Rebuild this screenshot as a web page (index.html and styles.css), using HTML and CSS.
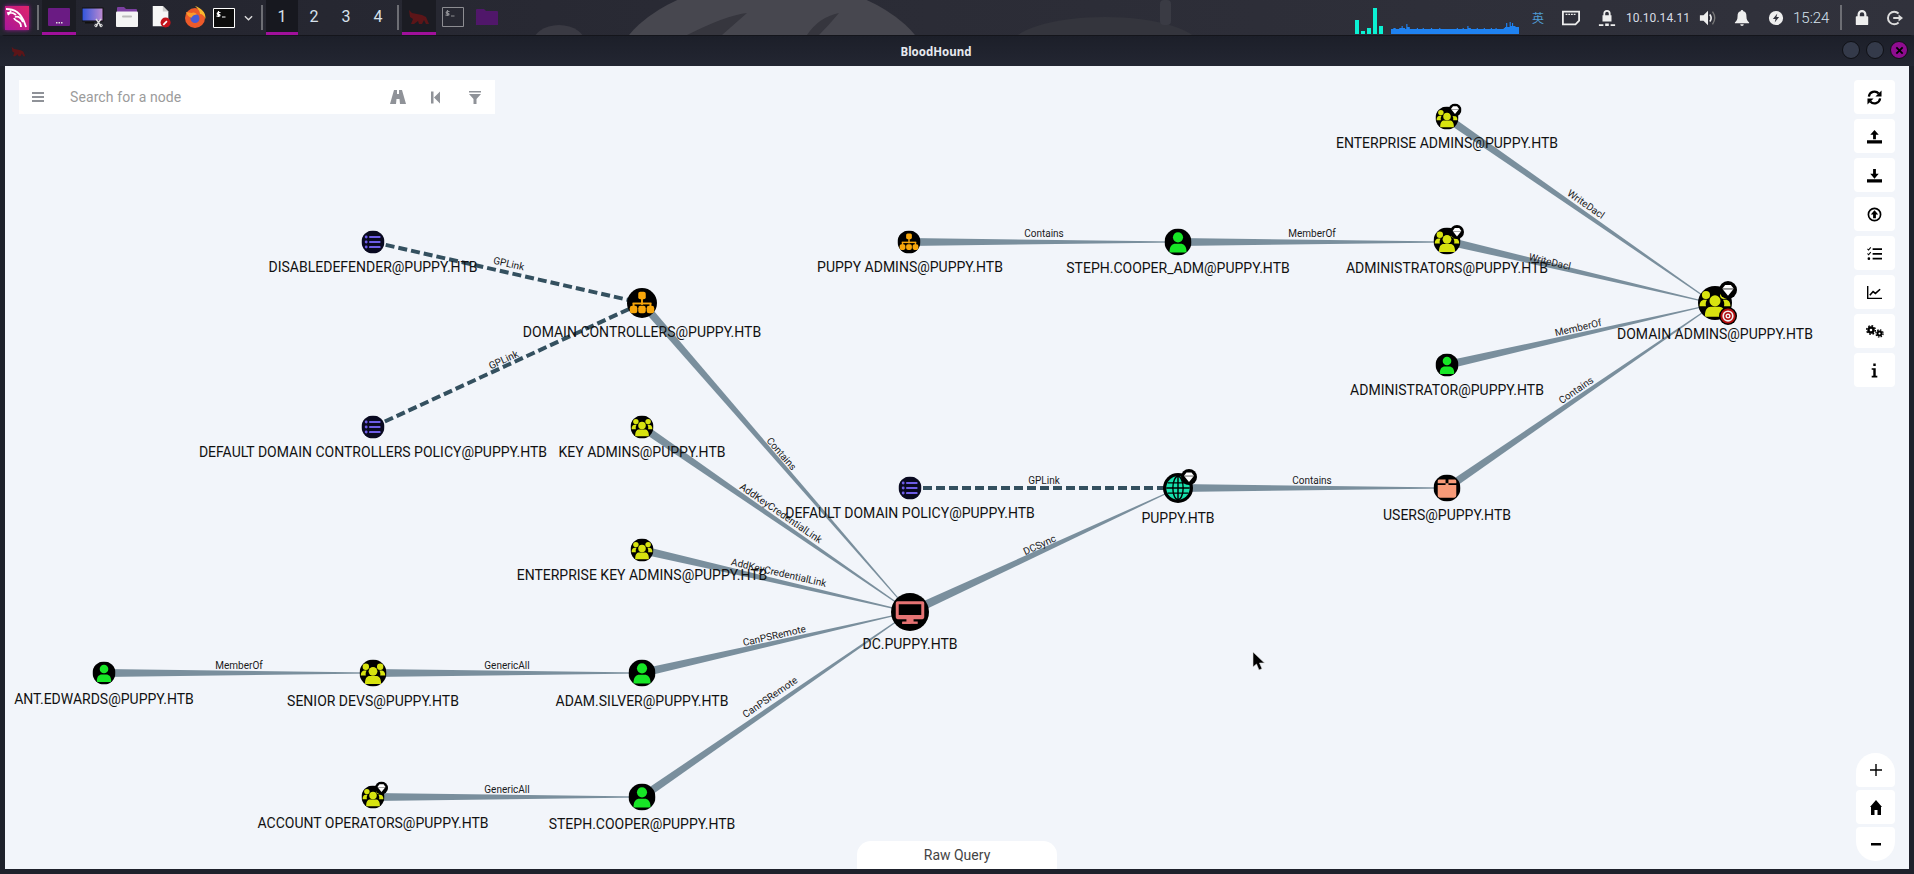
FILE: index.html
```html
<!DOCTYPE html>
<html lang="en">
<head>
<meta charset="utf-8">
<title>BloodHound</title>
<link rel="stylesheet" href="styles.css">
</head>
<body>
<svg class="defs" aria-hidden="true">
  <defs>
    <symbol id="n-group" viewBox="-16 -16 32 32">
      <circle r="16" fill="#000"/>
      <g fill="#d7e30f">
        <circle cx="-8.5" cy="-7.5" r="3.8"/><circle cx="8.5" cy="-7.5" r="3.8"/>
        <path d="M-14.5 3c0-4 2-6 4.5-6h2.5c-1.200 1.800-1.500 4-1 6z"/><path d="M14.500 3c0-4-2-6-4.500-6H7.500c1.200 1.800 1.500 4 1 6z"/>
        <circle cx="0" cy="-2" r="5.200"/>
        <path d="M-9.500 12c0-6 2.500-8.500 5.500-8.500h8c3 0 5.500 2.500 5.500 8.500q0 1-1 1h-17q-1 0-1-1z"/>
      </g>
    </symbol>
    <symbol id="n-user" viewBox="-16 -16 32 32">
      <circle r="16" fill="#000"/>
      <g fill="#17e626">
        <circle cx="0" cy="-5.500" r="6"/>
        <path d="M-10 11c0-6 3-9 7-9h6c4 0 7 3 7 9q0 1.500-1.500 1.500h-17Q-10 12.500-10 11z"/>
      </g>
    </symbol>
    <symbol id="n-ou" viewBox="-16 -16 32 32">
      <circle r="16" fill="#000"/>
      <g fill="#f7a60a">
        <rect x="-4" y="-12" width="8" height="8" rx="2.200"/>
        <rect x="-1" y="-5" width="2" height="7"/><rect x="-10" y="-.5" width="20" height="2"/>
        <rect x="-10" y="0" width="2" height="4"/><rect x="8" y="0" width="2" height="4"/>
        <rect x="-13" y="3" width="8" height="8" rx="2.500"/><rect x="-4" y="3" width="8" height="8" rx="2.500"/><rect x="5" y="3" width="8" height="8" rx="2.500"/>
      </g>
    </symbol>
    <symbol id="n-gpo" viewBox="-16 -16 32 32">
      <circle r="16" fill="#090920"/>
      <g fill="#6d5ce6">
        <circle cx="-9.500" cy="-7" r="2"/><circle cx="-9.500" cy="0" r="2"/><circle cx="-9.500" cy="7" r="2"/>
        <rect x="-5.500" y="-8.500" width="16" height="3" rx="1"/><rect x="-5.500" y="-1.500" width="16" height="3" rx="1"/><rect x="-5.500" y="5.500" width="16" height="3" rx="1"/>
      </g>
    </symbol>
    <symbol id="n-computer" viewBox="-16 -16 32 32">
      <circle r="16" fill="#000"/>
      <path fill="#e57373" fill-rule="evenodd" d="M-10.500-9h21q1.500 0 1.500 1.500v12q0 1.500-1.500 1.500H-3v2.500h3.500V10h-7V8.500H-3V6h-7.500Q-12 6-12 4.500v-12Q-12-9-10.500-9zM-9.500-6.500v9h19v-9z"/>
      <rect x="-3" y="5" width="6" height="3.500" fill="#e57373"/><rect x="-6.500" y="8" width="13" height="2" fill="#e57373"/>
    </symbol>
    <symbol id="n-domain" viewBox="-16 -16 32 32">
      <circle r="16" fill="#000"/>
      <circle r="12.500" fill="#17e2ad"/>
      <g fill="none" stroke="#000" stroke-width="1.500">
        <ellipse rx="5.500" ry="12.500"/><path d="M0-12.500v25M-12.500 0h25M-11-5.500h22M-11 5.500h22"/>
      </g>
    </symbol>
    <symbol id="n-container" viewBox="-16 -16 32 32">
      <circle r="16" fill="#000"/>
      <path fill="#f79a78" d="M-9.500-10h7.800v6.500h3.400V-10h7.800Q11-10 11-8v2.500H-11V-8q0-2 1.500-2zM-11-3.500H11V9q0 2.500-2.500 2.500h-17Q-11 11.500-11 9z"/>
    </symbol>
    <symbol id="b-gem" viewBox="-16 -16 32 32">
      <circle r="16" fill="#000"/>
      <path fill="#fff" d="M-5-9h10l5 6.500H-10z"/>
      <path fill="#a9a9a9" d="M-10-2.500h20l-.8 1.500H-9.200z"/>
      <path fill="#fff" d="M-9-1H9L0 10z"/>
    </symbol>
    <symbol id="b-target" viewBox="-16 -16 32 32">
      <circle r="16" fill="#000"/>
      <circle r="13.500" fill="#b30d0d"/><circle r="10" fill="#f2f2f2"/><circle r="7" fill="#b30d0d"/><circle r="4.500" fill="#f2f2f2"/><circle r="2" fill="#b30d0d"/>
    </symbol>
    <symbol id="i-term" viewBox="0 0 22 20">
      <path fill="none" stroke="currentColor" d="M.5.500h21v19H.5z"/>
      <path fill="none" stroke="currentColor" stroke-width="1.200" d="M5.500 3v6M7.500 4.500H5.200q-1 0-1 .9t1 .9h.8q1 0 1 .9t-1 .9H3.500M9 9h3.500"/>
    </symbol>
  </defs>
</svg>

<header class="panel">
  <span class="wall wall-a"></span><span class="wall wall-b"></span><span class="wall wall-c"></span><span class="wall wall-d"></span>
  <svg class="wall-lines" viewBox="640 0 240 35"><path d="M687 35q40-20 60-22l-25 22M807 35q12-18 32-22-10 12-20 22" fill="#36363e"/></svg>
  <div class="start">
    <svg viewBox="0 0 24 24" class="fill-icon"><path fill="none" stroke="#fff" stroke-width="1.800" d="M1 3c4 0 8 1 11 3 4 3 6 6 8 12l1 3M2 7c4-1 7 0 9 2M6 5l-3 4M10 11c3-1 6 1 8 5M9 12c1 3 4 3 6 5 1 1 1 3 1 4"/></svg>
  </div>
  <span class="sep"></span>
  <div class="tile tile-active">
    <svg class="ic22" viewBox="0 0 22 18"><rect width="22" height="18" rx="1" fill="#6a1b83"/><path d="M8 14h1.500v1.500H8zm2.500 0H12v1.500h-1.500zm2.500 0h1.500v1.500H13z" fill="#ddd"/></svg>
  </div>
  <div class="tile">
    <svg class="ic22" viewBox="0 0 22 20"><rect x="0" y="1" width="21" height="13" fill="url(#scr)" stroke="#111"/><linearGradient id="scr" x1="0" x2="1"><stop offset="0" stop-color="#2f55dd"/><stop offset="1" stop-color="#c08bd0"/></linearGradient><path d="M3 15h9v1.500H3z" fill="#111"/><path d="M14 12l5 7M19 12l-5 7" stroke="#ddd" stroke-width="1.300"/><circle cx="14" cy="18.500" r="1.300" fill="none" stroke="#ddd"/><circle cx="19" cy="18.500" r="1.300" fill="none" stroke="#ddd"/></svg>
  </div>
  <div class="tile">
    <svg class="ic22" viewBox="0 0 22 22"><path d="M1 2q0-1 1-1h6l2 2h10q1 0 1 1v3H1z" fill="#7b3fa0"/><rect y="5.500" width="22" height="15.500" rx="1" fill="#f4f4f4"/><rect x="6" y="9.500" width="10" height="2" rx="1" fill="#bbb"/></svg>
  </div>
  <div class="tile">
    <svg class="ic22" viewBox="0 0 22 24"><path d="M2 0h11l6 6v16H2z" fill="#f6f6f6"/><path d="M13 0l6 6h-6z" fill="#ccc"/><circle cx="16" cy="18" r="5.500" fill="#c4121a"/><path d="M13.500 20.500l4-4" stroke="#fff" stroke-width="1.800"/></svg>
  </div>
  <div class="tile">
    <svg class="ic22" viewBox="0 0 22 22"><circle cx="11" cy="12" r="10" fill="#ec5a2a"/><path d="M11 0c6 2 11 6 10.500 13-1-3-3-5-5.500-5 0-3-2-5-5-8z" fill="#f9b82e"/><circle cx="11" cy="12.500" r="4.500" fill="#4a5bd4"/><path d="M2 6c2 0 3 1 6 1 2-1 4 0 5 1.500-2 0-5 1-5 3-3 0-5-2-6-5.500z" fill="#fb9a2c"/></svg>
  </div>
  <div class="launch-term"><svg class="term term-white"><use href="#i-term"/></svg></div>
  <div class="chev"><svg viewBox="0 0 10 6" class="chev-svg"><path d="M1 1l4 4 4-4" fill="none" stroke="#ddd" stroke-width="1.500"/></svg></div>
  <span class="sep sep-b"></span>
  <div class="ws ws-active">1</div>
  <div class="ws">2</div>
  <div class="ws">3</div>
  <div class="ws">4</div>
  <span class="sep sep-c"></span>
  <div class="tile tile-active">
    <svg class="ic22" viewBox="0 0 22 16"><path class="bull" d="M1 1l3 3 10 2 4 2 3 7h-3l-2-4-2 4h-3l-1-3-4 3H3l2-5-3-2z"/></svg>
  </div>
  <div class="tile"><svg class="term term-dim"><use href="#i-term"/></svg></div>
  <div class="tile">
    <svg class="ic22" viewBox="0 0 22 18"><path d="M0 2q0-1 1-1h7l2 2h11q1 0 1 1v13H0z" fill="#50176a"/></svg>
  </div>

  <div class="tray">
    <svg class="cpu" viewBox="0 0 28 26"><g fill="#0bf1d3"><rect x="0" y="12" width="4" height="14"/><rect x="6" y="23" width="4" height="3"/><rect x="12" y="20" width="4" height="6"/><rect x="18" y="0" width="4" height="26"/><rect x="24" y="18" width="4" height="8"/></g></svg>
    <svg class="net" viewBox="0 0 109 14" preserveAspectRatio="none"><path fill="#1f82f0" d="M0 14V9h2v-1h2v1h3V8h2V6h1v2h2V9h1V4h1v3h2v2h6V8h1v1h4V8h1v1h6V8h1v1h6V8h1v1h14V8h1v1h4V8h1v1h3V6h1v2h2v1h5V8h1v1h5V8h1v1h5V8h1v1h3V8h1v1h6V8h1v-1h1V3h1v4h2V2h1v4h1V3h1v3h2v1h3v7z"/></svg>
    <span class="cjk">英</span>
    <svg class="tic t-net" viewBox="0 0 20 18"><path fill="none" stroke="#eee" stroke-width="2" d="M1 2h18v10l-4 4H1z"/><path stroke="#eee" stroke-width="1.500" d="M4 5h2m1 0h2m1 0h2m1 0h2"/></svg>
    <svg class="tic t-vpn" viewBox="0 0 20 22"><path fill="#eee" d="M6 6a4 4 0 0 1 8 0v2h1v7H5V8h1zm2 2h4V6a2 2 0 0 0-4 0z"/><path fill="#eee" d="M1 18h5v2H1zm7-1h4v3H8zm6 1h5v2h-5z"/></svg>
    <span class="ip">10.10.14.11</span>
    <svg class="tic t-vol" viewBox="0 0 20 18"><path fill="#eee" d="M1 6h4l5-5v16l-5-5H1z"/><path fill="none" stroke="#eee" stroke-width="1.800" d="M12 5q3 4 0 8"/><path fill="none" stroke="#777" stroke-width="1.500" d="M15 2q5 7 0 14"/></svg>
    <svg class="tic t-bell" viewBox="0 0 18 18"><path fill="#eee" d="M9 0a1.500 1.500 0 0 1 1.500 1.500C13 2 14 4 14 7c0 4 1 5 3 7v1H1v-1c2-2 3-3 3-7 0-3 1-5 3.500-5.500A1.500 1.500 0 0 1 9 0zM7 16h4a2 2 0 0 1-4 0z"/></svg>
    <svg class="tic t-pow" viewBox="0 0 18 18"><path fill="#eee" fill-rule="evenodd" d="M9 1a8 8 0 1 1 0 16A8 8 0 0 1 9 1zM10.500 4L5.500 10h3l-1 4 5-6h-3z"/></svg>
    <span class="clock">15:24</span>
    <span class="sep sep-d"></span>
    <svg class="tic t-lock" viewBox="0 0 18 18"><path fill="#eee" d="M4 7V5a5 5 0 0 1 10 0v2h1q1 0 1 1v8q0 1-1 1H3q-1 0-1-1V8q0-1 1-1zm2.500 0h5V5a2.500 2.500 0 0 0-5 0z"/></svg>
    <svg class="tic t-out" viewBox="0 0 18 18"><path fill="none" stroke="#ddd" stroke-width="2.200" d="M13 4a7 7 0 1 0 0 10"/><path fill="#ddd" d="M7 8h6V5l5 4-5 4v-3H7z"/></svg>
  </div>
</header>

<main class="window">
  <div class="titlebar">
    <svg class="title-bull" viewBox="0 0 22 16"><path class="bull" d="M1 1l3 3 10 2 4 2 3 7h-3l-2-4-2 4h-3l-1-3-4 3H3l2-5-3-2z"/></svg>
    <span class="title">BloodHound</span>
    <div class="winbtns"><span class="wbtn"></span><span class="wbtn"></span><span class="wbtn wbtn-close"><svg viewBox="0 0 10 10" class="x-svg"><path d="M1.500 1.500l7 7m0-7l-7 7" stroke="#000" stroke-width="2"/></svg></span></div>
  </div>

  <div class="canvas">
    <svg class="graph" viewBox="5 66 1904 803">
      <g class="edges">
        <polygon points="0,-4 326,-.4 326,.4 0,4" transform="translate(1447 118) rotate(34.76)"/>
        <polygon points="0,-4 275,-.4 275,.4 0,4" transform="translate(1447 241) rotate(13.23)"/>
        <polygon points="0,-4 275,-.4 275,.4 0,4" transform="translate(1447 365) rotate(-12.82)"/>
        <polygon points="0,-4 325,-.4 325,.4 0,4" transform="translate(1447 488) rotate(-34.47)"/>
        <polygon points="0,-4 269,-.4 269,.4 0,4" transform="translate(1178 488)"/>
        <polygon points="0,-4 269,-.4 269,.4 0,4" transform="translate(1178 242)"/>
        <polygon points="0,-4 269,-.4 269,.4 0,4" transform="translate(909 242)"/>
        <polygon points="0,-4.500 295,-.4 295,.4 0,4.500" transform="translate(910 612) rotate(-24.83)"/>
        <polygon points="0,-4 409,-.4 409,.4 0,4" transform="translate(642 303) rotate(49.06)"/>
        <polygon points="0,-4 326,-.4 326,.4 0,4" transform="translate(642 427) rotate(34.6)"/>
        <polygon points="0,-4 275,-.4 275,.4 0,4" transform="translate(642 550) rotate(13.03)"/>
        <polygon points="0,-4 275,-.4 275,.4 0,4" transform="translate(642 673) rotate(-12.82)"/>
        <polygon points="0,-4 326,-.4 326,.4 0,4" transform="translate(642 797) rotate(-34.6)"/>
        <polygon points="0,-4 269,-.4 269,.4 0,4" transform="translate(104 673)"/>
        <polygon points="0,-4 269,-.4 269,.4 0,4" transform="translate(373 673)"/>
        <polygon points="0,-4 269,-.4 269,.4 0,4" transform="translate(373 797)"/>
        <line class="dash" x1="373" y1="242" x2="642" y2="303"/>
        <line class="dash" x1="373" y1="427" x2="642" y2="303"/>
        <line class="dash" x1="910" y1="488" x2="1178" y2="488"/>
      </g>
      <g class="edge-labels">
        <text transform="translate(1584 207) rotate(34.76)">WriteDacl</text>
        <text transform="translate(1549 265) rotate(13.23)">WriteDacl</text>
        <text transform="translate(1579 331) rotate(-12.82)">MemberOf</text>
        <text transform="translate(1578 393) rotate(-34.47)">Contains</text>
        <text transform="translate(1312 484)">Contains</text>
        <text transform="translate(1312 237)">MemberOf</text>
        <text transform="translate(1044 237)">Contains</text>
        <text transform="translate(1044 484)">GPLink</text>
        <text transform="translate(1041 548) rotate(-24.83)">DCSync</text>
        <text transform="translate(508 267) rotate(12.8)">GPLink</text>
        <text transform="translate(505 363) rotate(-24.7)">GPLink</text>
        <text transform="translate(779 456) rotate(49.06)">Contains</text>
        <text transform="translate(779 516) rotate(34.6)">AddKeyCredentialLink</text>
        <text transform="translate(778 576) rotate(13.03)">AddKeyCredentialLink</text>
        <text transform="translate(775 639) rotate(-12.82)">CanPSRemote</text>
        <text transform="translate(772 700) rotate(-34.6)">CanPSRemote</text>
        <text transform="translate(239 669)">MemberOf</text>
        <text transform="translate(507 669)">GenericAll</text>
        <text transform="translate(507 793)">GenericAll</text>
      </g>
      <g class="nodes">
        <use href="#n-group" x="1435.500" y="106.500" width="23" height="23"/><use href="#b-gem" x="1448.500" y="103.500" width="13" height="13"/>
        <use href="#n-group" x="1433.500" y="227.500" width="27" height="27"/><use href="#b-gem" x="1450" y="225" width="14" height="14"/>
        <use href="#n-user" x="1164.500" y="228.500" width="27" height="27"/>
        <use href="#n-ou" x="897.500" y="230.500" width="23" height="23"/>
        <use href="#n-group" x="1698" y="286" width="34" height="34"/><use href="#b-gem" x="1719" y="281" width="18" height="18"/><use href="#b-target" x="1719" y="307" width="18" height="18"/>
        <use href="#n-user" x="1435.500" y="353.500" width="23" height="23"/>
        <use href="#n-container" x="1433.500" y="474.500" width="27" height="27"/>
        <use href="#n-domain" x="1163" y="473" width="30" height="30"/><use href="#b-gem" x="1181" y="469" width="16" height="16"/>
        <use href="#n-gpo" x="898.500" y="476.500" width="23" height="23"/>
        <use href="#n-computer" x="891" y="593" width="38" height="38"/>
        <use href="#n-ou" x="627" y="288" width="30" height="30"/>
        <use href="#n-gpo" x="361.500" y="230.500" width="23" height="23"/>
        <use href="#n-gpo" x="361.500" y="415.500" width="23" height="23"/>
        <use href="#n-group" x="630.500" y="415.500" width="23" height="23"/>
        <use href="#n-group" x="630.500" y="538.500" width="23" height="23"/>
        <use href="#n-user" x="628.500" y="659.500" width="27" height="27"/>
        <use href="#n-group" x="359.500" y="659.500" width="27" height="27"/>
        <use href="#n-user" x="92.500" y="661.500" width="23" height="23"/>
        <use href="#n-group" x="361.500" y="785.500" width="23" height="23"/><use href="#b-gem" x="375" y="781.500" width="13" height="13"/>
        <use href="#n-user" x="628.500" y="783.500" width="27" height="27"/>
      </g>
      <g class="node-labels">
        <text x="1447" y="148">ENTERPRISE ADMINS@PUPPY.HTB</text>
        <text x="1447" y="273">ADMINISTRATORS@PUPPY.HTB</text>
        <text x="1178" y="273">STEPH.COOPER_ADM@PUPPY.HTB</text>
        <text x="910" y="272">PUPPY ADMINS@PUPPY.HTB</text>
        <text x="1715" y="339">DOMAIN ADMINS@PUPPY.HTB</text>
        <text x="1447" y="395">ADMINISTRATOR@PUPPY.HTB</text>
        <text x="1447" y="520">USERS@PUPPY.HTB</text>
        <text x="1178" y="523">PUPPY.HTB</text>
        <text x="910" y="518">DEFAULT DOMAIN POLICY@PUPPY.HTB</text>
        <text x="910" y="649">DC.PUPPY.HTB</text>
        <text x="642" y="337">DOMAIN CONTROLLERS@PUPPY.HTB</text>
        <text x="373" y="272">DISABLEDEFENDER@PUPPY.HTB</text>
        <text x="373" y="457">DEFAULT DOMAIN CONTROLLERS POLICY@PUPPY.HTB</text>
        <text x="642" y="457">KEY ADMINS@PUPPY.HTB</text>
        <text x="642" y="580">ENTERPRISE KEY ADMINS@PUPPY.HTB</text>
        <text x="642" y="706">ADAM.SILVER@PUPPY.HTB</text>
        <text x="373" y="706">SENIOR DEVS@PUPPY.HTB</text>
        <text x="104" y="704">ANT.EDWARDS@PUPPY.HTB</text>
        <text x="373" y="828">ACCOUNT OPERATORS@PUPPY.HTB</text>
        <text x="642" y="829">STEPH.COOPER@PUPPY.HTB</text>
      </g>
      <path class="cursor" d="M1253 652v15l3.500-3 2.500 6 3-1.300-2.500-5.700h5z"/>
    </svg>

    <div class="search">
      <svg class="bar-ic menu-ic" viewBox="0 0 12 12"><path d="M0 1h12v2H0zm0 4h12v2H0zm0 4h12v2H0z"/></svg>
      <span class="placeholder">Search for a node</span>
      <svg class="bar-ic road-ic" viewBox="0 0 16 14"><path d="M4 0h3v4h2V0h3l4 14h-6l-.5-5h-3L6 14H0z"/></svg>
      <svg class="bar-ic back-ic" viewBox="0 0 9 12"><path d="M0 0h2.500v12H0zM9 0v12L3 6z"/></svg>
      <svg class="bar-ic filter-ic" viewBox="0 0 12 13"><path d="M0 0h12v1.500H0zM0 3h12L7.500 8v5h-3V8z"/></svg>
    </div>

    <div class="tools">
      <button class="tool"><svg viewBox="0 0 16 16"><path fill="none" stroke="#000" stroke-width="2.400" d="M2 7a6 6 0 0 1 10.500-3.200M14 9a6 6 0 0 1-10.500 3.200"/><path d="M15.500 .5v6.500H9zM.5 15.500V9H7z"/></svg></button>
      <button class="tool"><svg viewBox="0 0 16 16"><path d="M8 1l4.500 5H9.500v5h-3V6H3.500zM0 12h16v3.500H0z"/></svg></button>
      <button class="tool"><svg viewBox="0 0 16 16"><path d="M6.500 1h3v5h3L8 11.500 3.500 6h3zM0 12h16v3.500H0z"/></svg></button>
      <button class="tool"><svg viewBox="0 0 16 16"><circle cx="8" cy="8" r="6.500" fill="none" stroke="#000" stroke-width="1.800"/><path d="M8 3.500L12 8H9.500v4h-3V8H4z"/></svg></button>
      <button class="tool"><svg viewBox="0 0 16 16"><path d="M6 2.500h10v1.800H6zM6 7.500h10v1.800H6zM6 12.500h10v1.800H6z"/><path fill="none" stroke="#000" stroke-width="1.100" d="M.5 3l1.200 1.300L4 1.500M.5 8l1.200 1.300L4 6.500"/><circle cx="2" cy="13.500" r="1.400"/></svg></button>
      <button class="tool"><svg viewBox="0 0 16 16"><path d="M0 1h1.500v12.500H16V15H0z"/><path fill="none" stroke="#000" stroke-width="1.700" d="M3 11l3.500-4 2.500 2 5-4.500"/></svg></button>
      <button class="tool"><svg class="cogs" viewBox="0 0 18 13"><g fill="none" stroke="#000"><circle cx="5" cy="5" r="2.500" stroke-width="2.400"/><circle cx="5" cy="5" r="4.300" stroke-width="1.500" stroke-dasharray="1.700 1.670"/><circle cx="13.500" cy="8.500" r="2" stroke-width="2"/><circle cx="13.500" cy="8.500" r="3.600" stroke-width="1.300" stroke-dasharray="1.500 1.330"/></g></svg></button>
      <button class="tool"><svg viewBox="0 0 16 16"><path d="M6.700 .5h2.600v2.600H6.700zM5 5.500h4.300v8.200H11v1.800H5v-1.800h1.700V7.300H5z"/></svg></button>
    </div>

    <div class="zoomer">
      <button class="zbtn zbtn-top"><svg viewBox="0 0 12 12"><path d="M5.300 0h1.400v5.300H12v1.400H6.700V12H5.300V6.700H0V5.300h5.300z"/></svg></button>
      <button class="zbtn"><svg class="home" viewBox="0 0 12 15"><path d="M6 0l6 7h-1v8H7.500v-5h-3v5H1V7H0z"/></svg></button>
      <button class="zbtn zbtn-bottom"><svg viewBox="0 0 12 12"><path d="M1 5h10v2.500H1z"/></svg></button>
    </div>

    <div class="rawquery">Raw Query</div>
  </div>
</main>
</body>
</html>
```
FILE: styles.css
```css
* { box-sizing: border-box; }
html, body { margin: 0; padding: 0; }
body {
  width: 1914px;
  height: 874px;
  overflow: hidden;
  background: #1e212b;
  font-family: "Roboto", "Liberation Sans", sans-serif;
  display: flex;
  flex-direction: column;
}
.defs { position: absolute; width: 0; height: 0; }

/* top panel */
.panel {
  position: relative;
  height: 35px;
  flex: none;
  display: flex;
  align-items: center;
  overflow: hidden;
  padding-left: 5px;
  background: linear-gradient(90deg, #23242e 0%, #2a2b35 40%, #31323c 100%);
  color: #e8e8e8;
}
.panel > *:not(.wall):not(.wall-lines) { position: relative; }
.wall { position: absolute; border-radius: 50%; }
.wall-a { left: 612px; top: -19px; width: 320px; height: 196px; background: #47474f; }
.wall-b { left: 532px; top: 25px; width: 54px; height: 40px; background: #3a3a43; }
.wall-c { left: 1010px; top: 17px; width: 190px; height: 60px; background: #34353d; }
.wall-d { left: 1160px; top: 0; width: 11px; height: 25px; border-radius: 4px; background: #3a3b44; }
.wall-lines { position: absolute; left: 640px; top: 0; width: 240px; height: 35px; }

.start {
  width: 24px;
  height: 24px;
  background: linear-gradient(45deg, #a9179b, #e0246a);
  box-shadow: 0 0 4px #a9179b;
}
.fill-icon { display: block; width: 24px; height: 24px; }
.sep { width: 2px; height: 25px; margin: 0 3px 0 8px; background: #6d6e74; flex: none; }
.sep-b { margin: 0 3px 0 1px; }
.sep-c { margin: 0 3px 0 3px; }
.sep-d { margin: 0 12px 0 12px; height: 25px; }
.tile {
  width: 34px;
  height: 35px;
  flex: none;
  display: flex;
  align-items: center;
  justify-content: center;
  padding-top: 1px;
  border-bottom: 3px solid transparent;
}
.tile-active { background: #1b1c23; border-bottom-color: #a0109b; }
.launch-term { width: 24px; display: flex; justify-content: center; flex: none; }
.ic22 { width: 22px; height: 22px; display: block; }
.term { width: 22px; height: 20px; display: block; }
.term-white { color: #fff; background: #0c0c0c; }
.term-dim { color: #8d8d92; }
.chev { width: 24px; display: flex; justify-content: center; flex: none; }
.chev-svg { width: 9px; height: 6px; }
.ws {
  width: 32px;
  height: 35px;
  flex: none;
  display: flex;
  align-items: center;
  justify-content: center;
  padding-top: 1px;
  border-bottom: 3px solid transparent;
  font-size: 16px;
  color: #d8e2ec;
}
.ws-active { background: #17181f; border-bottom-color: #a0109b; }
.bull { fill: #5c1518; }

.tray {
  position: absolute !important;
  left: 1355px;
  top: 0;
  height: 35px;
  display: flex;
  align-items: center;
}
.cpu { width: 28px; height: 26px; align-self: flex-end; margin-bottom: 1px; flex: none; }
.net { width: 128px; height: 14px; align-self: flex-end; margin: 0 0 1px 8px; flex: none; }
.cjk { width: 20px; margin-left: 9px; text-align: center; font: 12px "Noto Sans CJK SC", sans-serif; color: #4f9bd2; flex: none; }
.tic { height: 18px; flex: none; }
.t-net { width: 18px; margin-left: 14px; }
.t-vpn { width: 18px; height: 20px; margin-left: 18px; }
.ip { margin-left: 10px; width: 64px; font-size: 12px; color: #d8dce4; letter-spacing: .05px; flex: none; white-space: nowrap; }
.t-vol { width: 18px; margin-left: 9px; }
.t-bell { width: 16px; margin-left: 17px; }
.t-pow { width: 16px; margin-left: 18px; }
.clock { margin-left: 9px; width: 35px; font-size: 15px; font-weight: 300; color: #d7e3ef; flex: none; }
.t-lock { width: 16px; }
.t-out { width: 16px; margin-left: 17px; }

/* application window */
.window {
  flex: 1;
  min-height: 0;
  display: flex;
  flex-direction: column;
  padding: 0 5px 5px;
  border-top: 1px solid #14151b;
  border-radius: 5px 5px 0 0;
  background: #1e212b;
}
.titlebar {
  height: 30px;
  flex: none;
  position: relative;
  display: flex;
  align-items: center;
  justify-content: center;
  background: linear-gradient(#1c1f29, #232632);
  margin: 0 -5px;
}
.title-bull { position: absolute; left: 11px; top: 10px; width: 15px; height: 11px; }
.title { font: 700 11.500px "Noto Sans", sans-serif; color: #e6e8ee; margin-right: 42px; }
.winbtns { position: absolute; right: 6px; top: 5px; display: flex; gap: 6px; }
.wbtn { width: 18px; height: 18px; border-radius: 50%; background: #343a4a; border: 1px solid #0f1015; display: flex; align-items: center; justify-content: center; }
.wbtn-close { background: #8f0c90; }
.x-svg { width: 9px; height: 9px; }

.canvas { position: relative; flex: 1; min-height: 0; overflow: hidden; background: #f2f5fa; }
.graph { position: absolute; left: 0; top: 0; width: 1904px; height: 803px; display: block; }
.edges polygon { fill: #7a8f9d; }
.dash { stroke: #34505f; stroke-width: 4; stroke-dasharray: 9 4; }
.edge-labels text { font: 10px "Roboto", sans-serif; fill: #1a1a1a; text-anchor: middle; }
.node-labels text { font: 14px "Roboto", sans-serif; fill: #111; text-anchor: middle; }
.cursor { fill: #000; stroke: #ddd; stroke-width: .6; }

.search {
  position: absolute;
  left: 14px;
  top: 14px;
  width: 476px;
  height: 34px;
  background: #fff;
  display: flex;
  align-items: center;
}
.bar-ic { fill: #8f9298; flex: none; display: block; }
.menu-ic { width: 12px; height: 12px; margin-left: 13px; }
.placeholder { margin-left: 26px; font-size: 14px; color: #9b9b9b; flex: 1; letter-spacing: .1px; }
.road-ic { width: 16px; height: 14px; }
.back-ic { width: 9px; height: 13px; margin-left: 25px; }
.filter-ic { width: 12px; height: 13px; margin-left: 29px; margin-right: 14px; }

.tools { position: absolute; right: 14px; top: 14px; display: flex; flex-direction: column; gap: 5px; }
.tool {
  width: 41px;
  height: 34px;
  border: 0;
  padding: 0;
  background: #fff;
  border-radius: 4px;
  display: flex;
  align-items: center;
  justify-content: center;
}
.tool svg { width: 15px; height: 15px; display: block; }
.tool svg.cogs { width: 18px; height: 13px; }

.zoomer { position: absolute; right: 14px; bottom: 8px; display: flex; flex-direction: column; gap: 3px; }
.zbtn {
  width: 39px;
  height: 34px;
  border: 0;
  padding: 0;
  background: #fff;
  border-radius: 4px;
  display: flex;
  align-items: center;
  justify-content: center;
}
.zbtn svg { width: 12px; height: 12px; display: block; }
.zbtn svg.home { width: 12px; height: 15px; }
.zbtn-top { border-radius: 20px 20px 4px 4px; }
.zbtn-bottom { border-radius: 4px 4px 20px 20px; }

.rawquery {
  position: absolute;
  left: 852px;
  bottom: 0;
  width: 200px;
  height: 28px;
  background: #fff;
  border-radius: 14px 14px 0 0;
  font-size: 14px;
  color: #444;
  display: flex;
  align-items: center;
  justify-content: center;
}
```
